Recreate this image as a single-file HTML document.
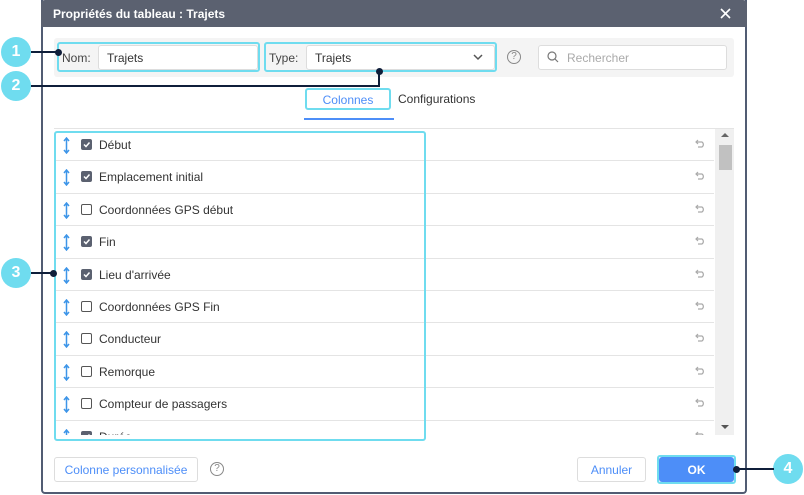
<!DOCTYPE html>
<html><head><meta charset="utf-8"><style>
*{box-sizing:border-box;margin:0;padding:0}
body{width:804px;height:495px;background:#fff;font-family:"Liberation Sans",sans-serif;position:relative;overflow:hidden;font-size:12px;color:#333}
.abs{position:absolute}
.dlg{left:41px;top:0;width:706px;height:494px;border:2px solid #515c73;border-top:none;border-radius:0 0 4px 4px;background:#fff}
.hdr{left:41px;top:0;width:706px;height:27px;background:#5b6170;border-radius:4px 4px 0 0;color:#fff;font-weight:bold;font-size:12px;padding:7px 0 0 12px}
.cy{border:2px solid #6fdcef;border-radius:3px}
.inp{background:#fff;border:1px solid #ddd;border-radius:3px}
.circ{width:30px;height:30px;border-radius:50%;background:#6fdcef;color:#fff;font-weight:bold;font-size:16px;text-align:center;line-height:30px}
.row{left:54px;width:660px;height:32.4px;border-bottom:1px solid #e4e4e4}
.row .ar{position:absolute;left:9px;top:8px}
.row .cb{position:absolute;left:27px;top:10px;width:11px;height:11px;border:1px solid #555;border-radius:2px}
.row .cb.on{background:#5b6170;border-color:#5b6170}
.row .t{position:absolute;left:45px;top:9px;font-size:12px;color:#333}
.row .u{position:absolute;right:8px;top:10px}
.dot{width:7px;height:7px;border-radius:50%;background:#0f1e3a}
.ln{background:#0f1e3a}
</style></head><body>
<div class="abs dlg"></div>
<div class="abs hdr">Propriétés du tableau : Trajets</div>
<svg class="abs" style="left:720px;top:8px" width="11" height="11"><path d="M1 1l9 9M10 1l-9 9" stroke="#fff" stroke-width="1.6"/></svg>
<div class="abs" style="left:54px;top:38px;width:680px;height:39px;background:#f4f4f4;border-radius:3px"></div>
<div class="abs cy" style="left:57px;top:42px;width:203px;height:30px"></div>
<div class="abs" style="left:62px;top:51px;color:#444">Nom:</div>
<div class="abs inp" style="left:98px;top:45px;width:160px;height:25px;padding:5px 8px">Trajets</div>
<div class="abs cy" style="left:264px;top:42px;width:233px;height:30px"></div>
<div class="abs" style="left:269px;top:51px;color:#444">Type:</div>
<div class="abs inp" style="left:306px;top:45px;width:189px;height:25px;padding:5px 8px">Trajets</div>
<svg class="abs" style="left:473px;top:54px" width="10" height="7"><path d="M1 1l4 4 4-4" stroke="#555" stroke-width="1.5" fill="none"/></svg>
<div class="abs" style="left:507px;top:50px;width:14px;height:14px;border:1px solid #888;border-radius:50%;font-size:10px;text-align:center;line-height:12px;color:#888">?</div>
<div class="abs inp" style="left:538px;top:45px;width:189px;height:25px;padding:5px 0 0 28px;color:#aaa">Rechercher</div>
<svg class="abs" style="left:547px;top:51px" width="12" height="12"><circle cx="5" cy="5" r="4" stroke="#777" fill="none" stroke-width="1.2"/><path d="M8 8l3 3" stroke="#777" stroke-width="1.2"/></svg>
<div class="abs cy" style="left:305px;top:88px;width:86px;height:22px;color:#4d8ef8;text-align:center;padding-top:3px">Colonnes</div>
<div class="abs" style="left:304px;top:118px;width:90px;height:2px;background:#4d8ef8"></div>
<div class="abs" style="left:398px;top:92px;color:#333">Configurations</div>
<div class="abs" style="left:54px;top:128px;width:680px;height:1px;background:#e4e4e4"></div>
<div class="abs" style="left:715px;top:129px;width:19px;height:306px;background:#f0f0f0"></div>
<div class="abs" style="left:719px;top:145px;width:13px;height:25px;background:#c1c1c1"></div>
<div class="abs" style="left:721px;top:133px;width:0;height:0;border:4px solid transparent;border-bottom-color:#666;border-top:none"></div>
<div class="abs" style="left:721px;top:425px;width:0;height:0;border:4px solid transparent;border-top-color:#555;border-bottom:none"></div>
<div id="rows"></div>
<div class="abs cy" style="left:54px;top:131px;width:372px;height:310px"></div>
<div class="abs" style="left:54px;top:457px;width:144px;height:25px;border:1px solid #ddd;border-radius:3px;color:#4d8ef8;text-align:center;padding-top:5px">Colonne personnalisée</div>
<div class="abs" style="left:210px;top:462px;width:14px;height:14px;border:1px solid #888;border-radius:50%;font-size:10px;text-align:center;line-height:12px;color:#888">?</div>
<div class="abs" style="left:577px;top:457px;width:69px;height:25px;border:1px solid #ddd;border-radius:3px;color:#4d8ef8;text-align:center;padding-top:5px">Annuler</div>
<div class="abs cy" style="left:657px;top:455px;width:79px;height:29px"></div>
<div class="abs" style="left:659px;top:457px;width:75px;height:25px;background:#4d8ef8;border-radius:3px;color:#fff;font-weight:bold;text-align:center;padding-top:6px">OK</div>
<div class="abs circ" style="left:1px;top:37px">1</div>
<div class="abs circ" style="left:1px;top:71px">2</div>
<div class="abs circ" style="left:1px;top:258px">3</div>
<div class="abs circ" style="left:773px;top:454px">4</div>
<div class="abs ln" style="left:31px;top:51px;width:27px;height:2px"></div><div class="abs dot" style="left:55px;top:49px"></div>
<div class="abs ln" style="left:31px;top:85px;width:348px;height:2px"></div><div class="abs ln" style="left:378px;top:71px;width:2px;height:16px"></div><div class="abs dot" style="left:376px;top:68px"></div>
<div class="abs ln" style="left:31px;top:272px;width:22px;height:2px"></div><div class="abs dot" style="left:50px;top:270px"></div>
<div class="abs ln" style="left:737px;top:468px;width:37px;height:2px"></div><div class="abs dot" style="left:733px;top:466px"></div>
<script>
var items=[["Début",1],["Emplacement initial",1],["Coordonnées GPS début",0],["Fin",1],["Lieu d'arrivée",1],["Coordonnées GPS Fin",0],["Conducteur",0],["Remorque",0],["Compteur de passagers",0],["Durée",1]];
var h='<div class="abs" style="left:54px;top:129px;width:660px;height:306px;overflow:hidden">';
items.forEach(function(it,i){h+='<div class="abs row" style="left:0;top:'+(i*32.4)+'px"><svg class="ar" width="7" height="17"><path d="M3.5 1v15M1 4l2.5-3 2.5 3M1 13l2.5 3 2.5-3" stroke="#3d95e8" stroke-width="1.5" fill="none"/></svg><div class="cb'+(it[1]?' on':'')+'">'+(it[1]?'<svg width="9" height="9" style="position:absolute;left:0;top:0"><path d="M2 4.5l2 2 3.5-4" stroke="#fff" stroke-width="1.5" fill="none"/></svg>':'')+'</div><div class="t">'+it[0]+'</div><svg class="u" width="11" height="9"><path d="M3 1L1 3l2 2M1 3h6a3 3 0 0 1 0 5H3" stroke="#aaa" stroke-width="1.2" fill="none"/></svg></div>';});
h+='</div>';
document.getElementById('rows').innerHTML=h;
</script>
</body></html>
